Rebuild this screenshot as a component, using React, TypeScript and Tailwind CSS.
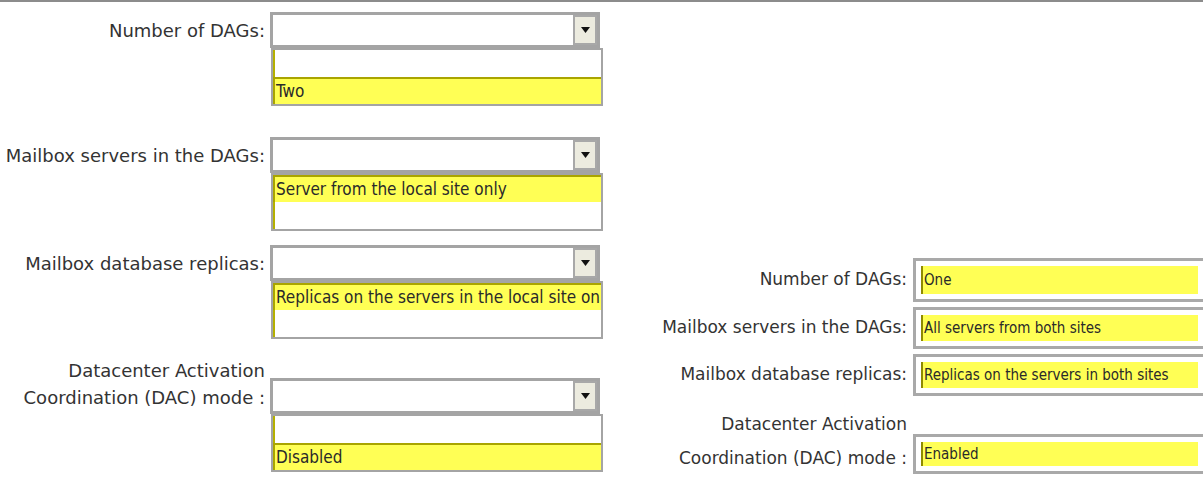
const label = "font-['DejaVu_Sans',sans-serif] text-[18px] text-[#333333] whitespace-nowrap";
const labelR = "font-['DejaVu_Sans',sans-serif] text-[17px] text-[#333333] whitespace-nowrap";
const narrow = "font-['Liberation_Sans_Narrow','DejaVu_Sans_Condensed',sans-serif] text-[#2a2a2a] whitespace-nowrap overflow-hidden";

function Select() {
  return (
    <div className="flex h-[36px] w-[330px] border-[3px] border-[#a4a4a4] bg-white">
      <div className="flex-1" />
      <div className="flex w-[24px] items-center justify-center border-[2px] border-[#a8a8a8] bg-[#ecebdf]">
        <svg width="9" height="6" viewBox="0 0 9 6">
          <path d="M0 0h9L4.5 6z" fill="#111" />
        </svg>
      </div>
    </div>
  );
}

function Item({ text, on }: { text?: string; on?: boolean }) {
  if (!on) return <div className="h-[27px] border-l-[2px] border-[#b5b000] bg-white" />;
  return (
    <div className={`flex h-[27px] items-center border-t-[2px] border-l-[2px] border-[#a9a400] bg-[#ffff55] pl-[1px] text-[17px] ${narrow}`}>
      {text}
    </div>
  );
}

function Dropdown({ items }: { items: { text?: string; on?: boolean }[] }) {
  return (
    <div className="flex shrink-0 flex-col">
      <Select />
      <div className="ml-[1px] w-[332px] border-[2px] border-[#a4a4a4] bg-white">
        {items.map((it, i) => (
          <Item key={i} {...it} />
        ))}
      </div>
    </div>
  );
}

function Answer({ text, h = "h-[26px]" }: { text: string; h?: string }) {
  return (
    <div className="w-[300px] shrink-0 border-[3px] border-[#a9a9a9] bg-white py-[5px] pl-[5px] pr-[12px]">
      <div className={`flex ${h} items-center border-l-[2px] border-[#8f8a00] bg-[#ffff55] pl-[1px] text-[15px] ${narrow}`}>
        {text}
      </div>
    </div>
  );
}

export default function App() {
  return (
    <div className="h-[478px] w-[1203px] overflow-hidden bg-white">
      <div className="h-[2px] bg-[#8c8c8c]" />
      <div className="flex">
        {/* question side */}
        <div className="flex w-[640px] shrink-0 flex-col">
          <div className="mt-[10px] flex gap-[5px]">
            <div className={`flex h-[36px] w-[265px] shrink-0 items-center justify-end ${label}`}>Number of DAGs:</div>
            <Dropdown items={[{}, { text: "Two", on: true }]} />
          </div>
          <div className="mt-[31px] flex gap-[5px]">
            <div className={`flex h-[36px] w-[265px] shrink-0 items-center justify-end ${label}`}>Mailbox servers in the DAGs:</div>
            <Dropdown items={[{ text: "Server from the local site only", on: true }, {}]} />
          </div>
          <div className="mt-[14px] flex gap-[5px]">
            <div className={`flex h-[36px] w-[265px] shrink-0 items-center justify-end ${label}`}>Mailbox database replicas:</div>
            <Dropdown items={[{ text: "Replicas on the servers in the local site only", on: true }, {}]} />
          </div>
          <div className="mt-[18px] flex gap-[5px]">
            <div className={`w-[265px] shrink-0 text-right leading-[27px] ${label}`}>
              <div>Datacenter Activation</div>
              <div>Coordination (DAC) mode :</div>
            </div>
            <div className="mt-[21px]">
              <Dropdown items={[{}, { text: "Disabled", on: true }]} />
            </div>
          </div>
        </div>

        {/* answer side */}
        <div className="flex shrink-0 flex-col pt-[256px]">
          <div className="flex items-center gap-[6px]">
            <div className={`w-[267px] shrink-0 text-right ${labelR}`}>Number of DAGs:</div>
            <Answer text="One" h="h-[28px]" />
          </div>
          <div className="mt-[5px] flex items-center gap-[6px]">
            <div className={`w-[267px] shrink-0 text-right ${labelR}`}>Mailbox servers in the DAGs:</div>
            <Answer text="All servers from both sites" />
          </div>
          <div className="mt-[5px] flex items-center gap-[6px]">
            <div className={`w-[267px] shrink-0 text-right ${labelR}`}>Mailbox database replicas:</div>
            <Answer text="Replicas on the servers in both sites" />
          </div>
          <div className="mt-[11px] flex gap-[6px]">
            <div className={`w-[267px] shrink-0 text-right leading-[34px] ${labelR}`}>
              <div>Datacenter Activation</div>
              <div>Coordination (DAC) mode :</div>
            </div>
            <div className="mt-[27px]">
              <Answer text="Enabled" h="h-[24px]" />
            </div>
          </div>
        </div>
      </div>
    </div>
  );
}
